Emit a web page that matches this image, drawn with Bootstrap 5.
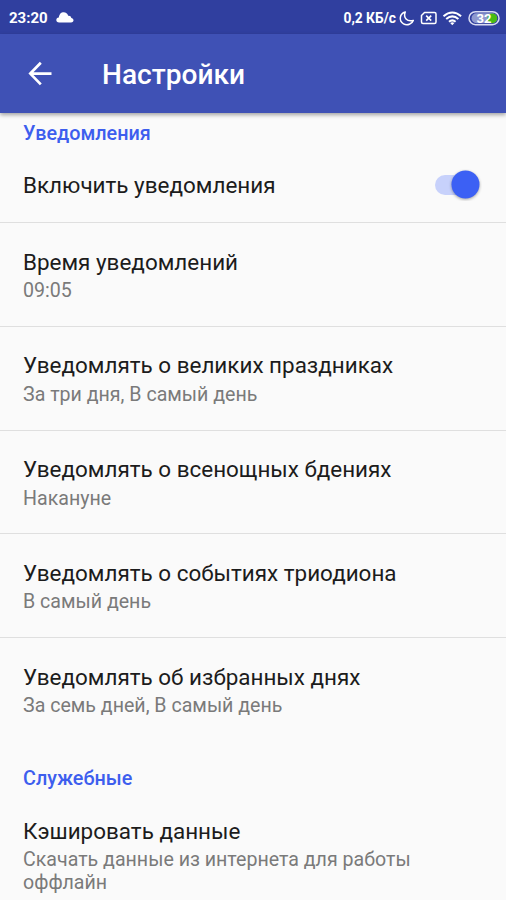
<!DOCTYPE html>
<html lang="ru">
<head>
<meta charset="utf-8">
<meta name="viewport" content="width=device-width, initial-scale=1">
<title>Настройки</title>
<link href="https://cdn.jsdelivr.net/npm/bootstrap@5.3.0/dist/css/bootstrap.min.css" rel="stylesheet">
<style>
body{font-family:Roboto,"Noto Sans",sans-serif;background:#fafafa;height:900px;overflow:hidden}
.status-bar{height:34px;background:#303f9f;padding:1px 6px 0 9px;font-size:15px;line-height:1}
.medium{font-weight:500}
.clock{padding-top:2px}
.status-bar .speed{font-size:13.8px;padding-top:2px}
.battery text{font:bold 13px Roboto,sans-serif;fill:#fff}
.app-bar{height:78.5px;background:#3f51b5;padding:2px 26px 0;box-shadow:0 2px 4px rgba(0,0,0,.35);z-index:2}
.app-bar h1{font-size:28.1px;line-height:33px;margin-left:49px;padding-top:1px}
.section-title{color:#3d5eee;font-size:19.8px;line-height:23px;padding:0 23px}
.section-title.first-title{padding-top:9px;height:35.5px}
.section-title.next-title{padding-top:25.5px;height:50.5px}
.pref{height:103.75px;padding:25.5px 23px 0;border-bottom:1.5px solid #dfdfdf}
.pref-switch{height:75px;padding-top:0;padding-right:24px}
.pref-end{border-bottom:0}
.pref-title{font-size:22.45px;line-height:27px;color:#1c1c1c}
.pref-note{font-size:19.6px;line-height:23px;color:#7a7a7a;margin-top:3.5px}
.toggle{width:47px;height:32px}
.toggle .knob{filter:drop-shadow(0 1.5px 1.5px rgba(0,0,0,.35))}
</style>
<script src="https://cdn.jsdelivr.net/npm/bootstrap@5.3.0/dist/js/bootstrap.bundle.min.js"></script>
</head>
<body>
<div class="status-bar d-flex align-items-center justify-content-between text-white">
  <div class="d-flex align-items-center gap-2">
    <span class="fw-bold clock">23:20</span>
    <svg width="18" height="12" viewBox="0 0 18 12"><path fill="#fff" d="M3.200 10.500C-.6 10.500-.6 5.800 2.800 5.500C3.600 1.500 5.500.3 7.500.3C10 .3 11.500 1.700 12.200 3.700C14.500 3.500 15.200 4.500 15.300 6C18.300 6.500 18.300 10.500 15 10.500Z"/></svg>
  </div>
  <div class="d-flex align-items-center">
    <span class="fw-bold speed">0,2 КБ/с</span>
    <svg class="battery" width="104" height="18" viewBox="396 8 104 18" fill="none" stroke="#fff" stroke-width="1.500">
      <path stroke-linejoin="round" d="M405.300 11C399.500 12.500 398.500 20 403.500 22.800C407.500 25 412 22.800 413.300 19.400C407 21.300 403 16.500 405.300 11Z"/>
      <path stroke-linejoin="round" d="M424.500 11.500H434.500Q436 11.500 436 13V21Q436 22.500 434.500 22.500H423Q421.500 22.500 421.500 21V14.500Z"/>
      <path stroke-width="1.600" d="M426.200 14.600L431.200 19.600M431.200 14.600L426.200 19.600"/>
      <g stroke-width="2"><path d="M443.500 15.200Q452.300 7.800 461.100 15.200M446.200 18Q452.300 12.800 458.400 18M449 20.700Q452.300 18 455.600 20.700"/></g>
      <path fill="#fff" stroke="none" d="M450.200 22Q452.300 20.300 454.400 22L452.300 24.200Z"/>
      <rect x="469" y="10.700" width="30" height="13" rx="6.500" stroke="#d9dcf2"/>
      <rect x="471.500" y="12.300" width="25.500" height="10" rx="5" fill="#8f99cf" stroke="none"/>
      <circle cx="492.300" cy="17.300" r="4.900" fill="#48bd12" stroke="none"/>
      <text stroke="none" x="476.500" y="21.800">32</text>
    </svg>
  </div>
</div>
<header class="app-bar d-flex align-items-center text-white position-relative">
  <svg width="27" height="26" viewBox="0 0 27 26" fill="none" stroke="#fff" stroke-width="2.700"><path d="M14.800 1.800L4.300 12.600L14.800 23.400M4.300 12.600H25.500"/></svg>
  <h1 class="mb-0 medium">Настройки</h1>
</header>
<main>
  <h2 class="section-title first-title medium mb-0">Уведомления</h2>
  <div class="pref pref-switch d-flex align-items-center justify-content-between">
    <div class="pref-title">Включить уведомления</div>
    <svg class="toggle" viewBox="0 0 47 32" role="switch" aria-checked="true"><rect x="0" y="6" width="38" height="20" rx="10" fill="#c7d1fb"/><circle class="knob" cx="30.500" cy="15.500" r="14" fill="#3c60f4"/></svg>
  </div>
  <div class="pref"><div class="pref-title">Время уведомлений</div><div class="pref-note">09:05</div></div>
  <div class="pref"><div class="pref-title">Уведомлять о великих праздниках</div><div class="pref-note">За три дня, В самый день</div></div>
  <div class="pref"><div class="pref-title">Уведомлять о всенощных бдениях</div><div class="pref-note">Накануне</div></div>
  <div class="pref"><div class="pref-title">Уведомлять о событиях триодиона</div><div class="pref-note">В самый день</div></div>
  <div class="pref pref-end"><div class="pref-title">Уведомлять об избранных днях</div><div class="pref-note">За семь дней, В самый день</div></div>
  <h2 class="section-title next-title medium mb-0">Служебные</h2>
  <div class="pref pref-end"><div class="pref-title">Кэшировать данные</div><div class="pref-note">Скачать данные из интернета для работы оффлайн</div></div>
</main>
</body>
</html>
